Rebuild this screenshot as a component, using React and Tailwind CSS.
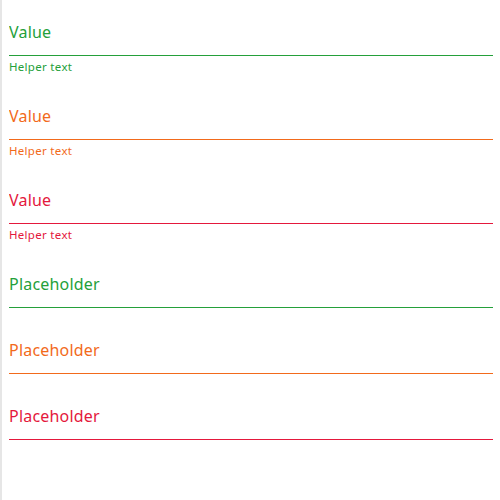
import React from 'react';

const tones = {
  success: { text: 'text-[#24a03a]', border: 'border-[#24a03a]' },
  warning: { text: 'text-[#f26a1b]', border: 'border-[#f26a1b]' },
  error: { text: 'text-[#e4183c]', border: 'border-[#e4183c]' },
};

const Field = ({ tone, value, placeholder, helper }) => {
  const t = tones[tone];
  return (
    <div className="pt-[9px] pb-[10px]">
      <input
        readOnly
        defaultValue={value}
        placeholder={placeholder}
        className={`block h-[47px] w-full border-b bg-transparent px-0 text-[16px] tracking-[0.2px] outline-none ${t.text} ${t.border} placeholder:text-inherit`}
      />
      {helper && (
        <div className={`h-[18px] pt-[3px] text-[11.5px] leading-[15px] tracking-[0.3px] ${t.text}`}>{helper}</div>
      )}
    </div>
  );
};

export default function App() {
  return (
    <div
      className="min-h-[500px] border-l-2 border-[#e6e6e6] bg-white pl-[7px] pr-[7px]"
      style={{ fontFamily: '"Noto Sans", "Open Sans", sans-serif' }}
    >
      <Field tone="success" value="Value" helper="Helper text" />
      <Field tone="warning" value="Value" helper="Helper text" />
      <Field tone="error" value="Value" helper="Helper text" />
      <Field tone="success" placeholder="Placeholder" />
      <Field tone="warning" placeholder="Placeholder" />
      <Field tone="error" placeholder="Placeholder" />
    </div>
  );
}
